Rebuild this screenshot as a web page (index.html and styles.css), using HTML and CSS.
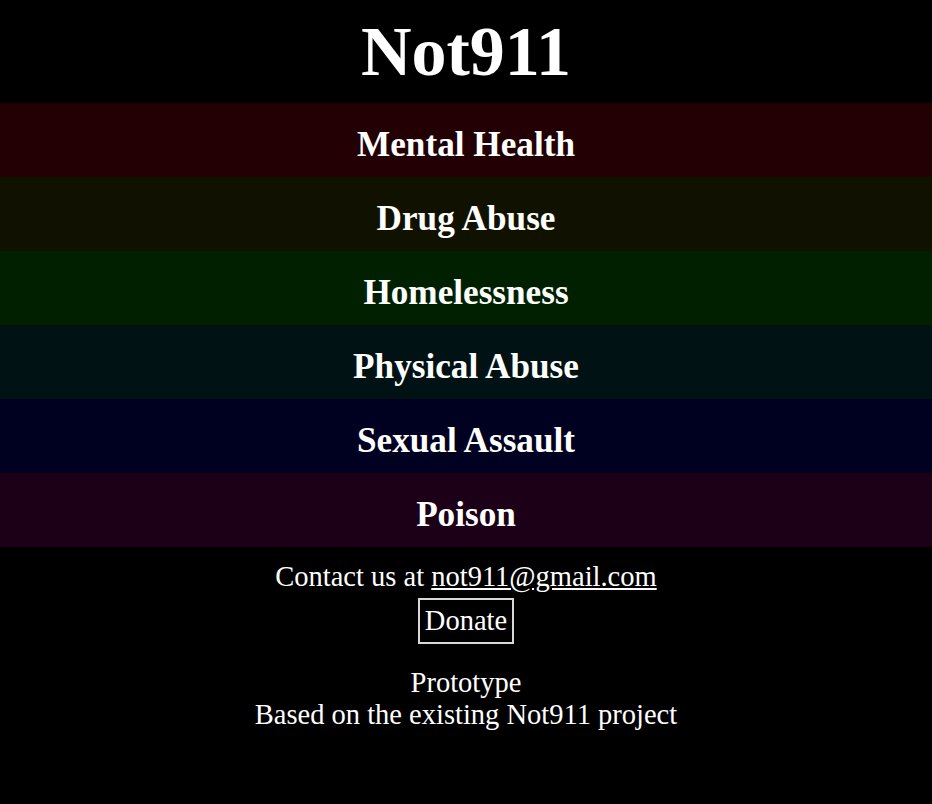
FILE: index.html
```html
<!DOCTYPE html>
<html lang="en">
<head>
<meta charset="utf-8">
<title>Not911</title>
<link rel="stylesheet" href="styles.css">
</head>
<body>
<header class="site-header">
  <h1 class="site-title">Not911</h1>
</header>
<nav class="topics">
  <a class="topic topic-mental" href="#">Mental Health</a>
  <a class="topic topic-drug" href="#">Drug Abuse</a>
  <a class="topic topic-home" href="#">Homelessness</a>
  <a class="topic topic-physical" href="#">Physical Abuse</a>
  <a class="topic topic-sexual" href="#">Sexual Assault</a>
  <a class="topic topic-poison" href="#">Poison</a>
</nav>
<footer class="site-footer">
  <p class="contact">Contact us at <a class="contact-link" href="#">not911@gmail.com</a></p>
  <button class="donate" type="button">Donate</button>
  <p class="credits">Prototype<br>Based on the existing Not911 project</p>
</footer>
</body>
</html>
```

FILE: styles.css
```css
html, body {
  margin: 0;
  padding: 0;
  background: #000;
  color: #fff;
  font-family: "Liberation Serif", "Times New Roman", serif;
}

.site-header {
  padding: 10px 0 10px;
  text-align: center;
}

.site-title {
  margin: 0;
  font-size: 70px;
  line-height: 83px;
  font-weight: bold;
}

.topics {
  display: flex;
  flex-direction: column;
}

.topic {
  display: block;
  height: 74px;
  box-sizing: border-box;
  padding: 22px 0 12px;
  text-align: center;
  font-size: 35.2px;
  line-height: 40px;
  font-weight: bold;
  color: #fff;
  text-decoration: none;
}

.topic-mental { background: #220004; }
.topic-drug { background: #111100; }
.topic-home { background: #002000; }
.topic-physical { background: #001214; }
.topic-sexual { background: #000020; }
.topic-poison { background: #1c0018; }

.site-footer {
  display: flex;
  flex-direction: column;
  align-items: center;
  padding-top: 14px;
  font-size: 28.5px;
  text-align: center;
}

.contact {
  margin: 0;
  line-height: 32px;
}

.contact-link {
  color: #fff;
  text-decoration: underline;
  text-decoration-skip-ink: auto;
}

.donate {
  margin-top: 5px;
  padding: 5px 5px;
  border: 2px solid #d8d8d8;
  background: #000;
  color: #fff;
  font-family: inherit;
  font-size: 28.5px;
  line-height: 32px;
}

.credits {
  margin: 23px 0 0;
  line-height: 32px;
}
```
